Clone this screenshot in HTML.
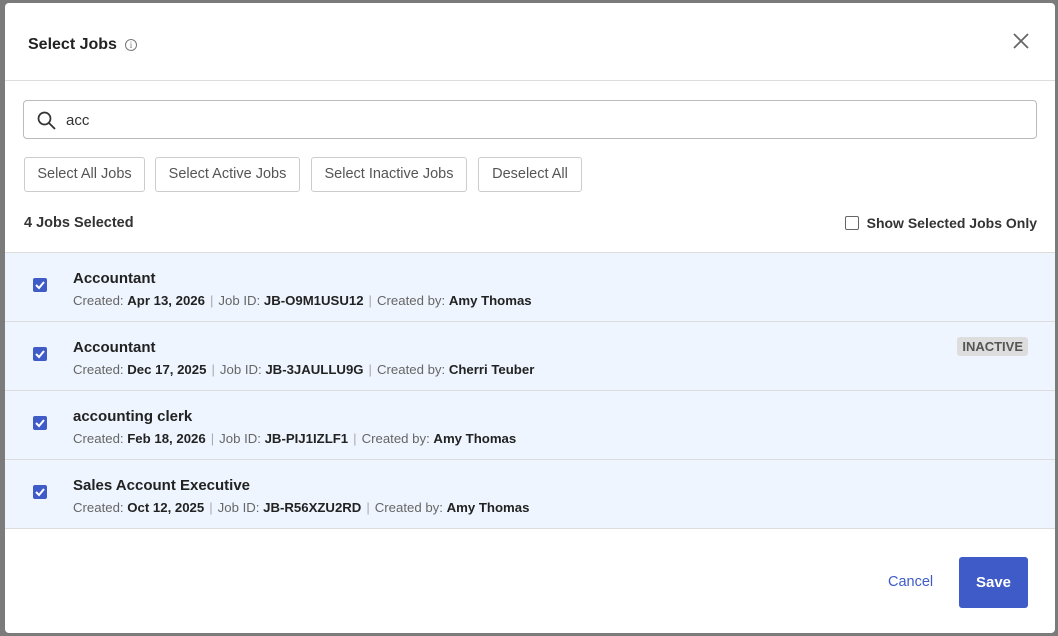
<!DOCTYPE html>
<html><head><style>
*{box-sizing:border-box;margin:0;padding:0}
body{width:1058px;height:636px;background:#7b7b7b;font-family:"Liberation Sans",sans-serif;position:relative;overflow:hidden}
.m{position:absolute;left:5px;top:3px;width:1050px;height:630px;background:#fff;border-radius:4px;overflow:hidden}
.h{height:78px;border-bottom:1px solid #ddd;position:relative}
.h .t{position:absolute;left:23px;top:33px;font-size:16px;font-weight:bold;color:#222}
.info{position:absolute;left:120px;top:36px;width:12px;height:12px;border:1px solid #777;border-radius:50%;font-size:9px;color:#777;text-align:center;line-height:10px;font-family:"Liberation Serif",serif}
.x{position:absolute;right:26px;top:30px}
.s{position:absolute;left:18px;top:97px;width:1014px;height:39px;border:1px solid #bbb;border-radius:4px}
.s span{position:absolute;left:42px;top:11px;font-size:15px;color:#333}
.b{position:absolute;top:154px;height:35px;border:1px solid #ccc;border-radius:3px;font-size:14.5px;color:#555;line-height:33px;text-align:center;white-space:nowrap}
.sel{position:absolute;left:19px;top:212px;font-size:14.5px;font-weight:bold;color:#333}
.ss{position:absolute;right:18px;top:212px;font-size:14px;color:#333;font-weight:bold}
.ss i{display:inline-block;width:14px;height:14px;border:1px solid #666;border-radius:2px;vertical-align:-2px;margin-right:8px}
.list{position:absolute;left:0;top:249px;width:1050px;border-top:1px solid #ddd}
.r{height:69px;background:#eef5fe;border-bottom:1px solid #dcdcdc;position:relative}
.cb{position:absolute;left:28px;top:25px;width:14px;height:14px;background:#3f5bc8;border-radius:2px}
.n{position:absolute;left:68px;top:17px;font-size:15px;font-weight:bold;color:#222}
.d{position:absolute;left:68px;top:40px;font-size:13.2px;color:#666}
.d b{color:#222}
.d em{font-style:normal;color:#aaa;margin:0 5px}
.tag{position:absolute;right:27px;top:15px;background:#ddd;border-radius:3px;font-size:13px;font-weight:bold;color:#555;padding:2px 5px}
.c{position:absolute;left:883px;top:571px;font-size:14.5px;color:#3f5bc8}
.sv{position:absolute;left:954px;top:554px;width:69px;height:51px;background:#3f5bc8;border-radius:3px;color:#fff;font-weight:bold;font-size:15px;text-align:center;line-height:51px}
</style></head><body>
<div class="m">
<div class="h"><div class="t">Select Jobs</div><div class="info">i</div>
<svg class="x" width="16" height="16" viewBox="0 0 16 16"><path d="M1 1L15 15M15 1L1 15" stroke="#666" stroke-width="1.8"/></svg></div>
<div class="s"><svg style="position:absolute;left:13px;top:10px" width="19" height="19" viewBox="0 0 19 19"><circle cx="7.5" cy="7.5" r="6" fill="none" stroke="#333" stroke-width="1.7"/><path d="M12 12L18 18" stroke="#333" stroke-width="1.8"/></svg><span>acc</span></div>
<div class="b" style="left:19px;width:121px">Select All Jobs</div>
<div class="b" style="left:150px;width:145px">Select Active Jobs</div>
<div class="b" style="left:306px;width:156px">Select Inactive Jobs</div>
<div class="b" style="left:473px;width:104px">Deselect All</div>
<div class="sel">4 Jobs Selected</div>
<div class="ss"><i></i>Show Selected Jobs Only</div>
<div class="list">
<div class="r"><div class="cb"><svg width="14" height="14"><path d="M3 7l3 3 5-6" stroke="#fff" stroke-width="2" fill="none"/></svg></div><div class="n">Accountant</div><div class="d">Created: <b>Apr 13, 2026</b><em>|</em>Job ID: <b>JB-O9M1USU12</b><em>|</em>Created by: <b>Amy Thomas</b></div></div>
<div class="r"><div class="cb"><svg width="14" height="14"><path d="M3 7l3 3 5-6" stroke="#fff" stroke-width="2" fill="none"/></svg></div><div class="n">Accountant</div><div class="d">Created: <b>Dec 17, 2025</b><em>|</em>Job ID: <b>JB-3JAULLU9G</b><em>|</em>Created by: <b>Cherri Teuber</b></div><div class="tag">INACTIVE</div></div>
<div class="r"><div class="cb"><svg width="14" height="14"><path d="M3 7l3 3 5-6" stroke="#fff" stroke-width="2" fill="none"/></svg></div><div class="n">accounting clerk</div><div class="d">Created: <b>Feb 18, 2026</b><em>|</em>Job ID: <b>JB-PIJ1IZLF1</b><em>|</em>Created by: <b>Amy Thomas</b></div></div>
<div class="r"><div class="cb"><svg width="14" height="14"><path d="M3 7l3 3 5-6" stroke="#fff" stroke-width="2" fill="none"/></svg></div><div class="n">Sales Account Executive</div><div class="d">Created: <b>Oct 12, 2025</b><em>|</em>Job ID: <b>JB-R56XZU2RD</b><em>|</em>Created by: <b>Amy Thomas</b></div></div>
</div>
<div class="c">Cancel</div>
<div class="sv">Save</div>
</div>
</body></html>
